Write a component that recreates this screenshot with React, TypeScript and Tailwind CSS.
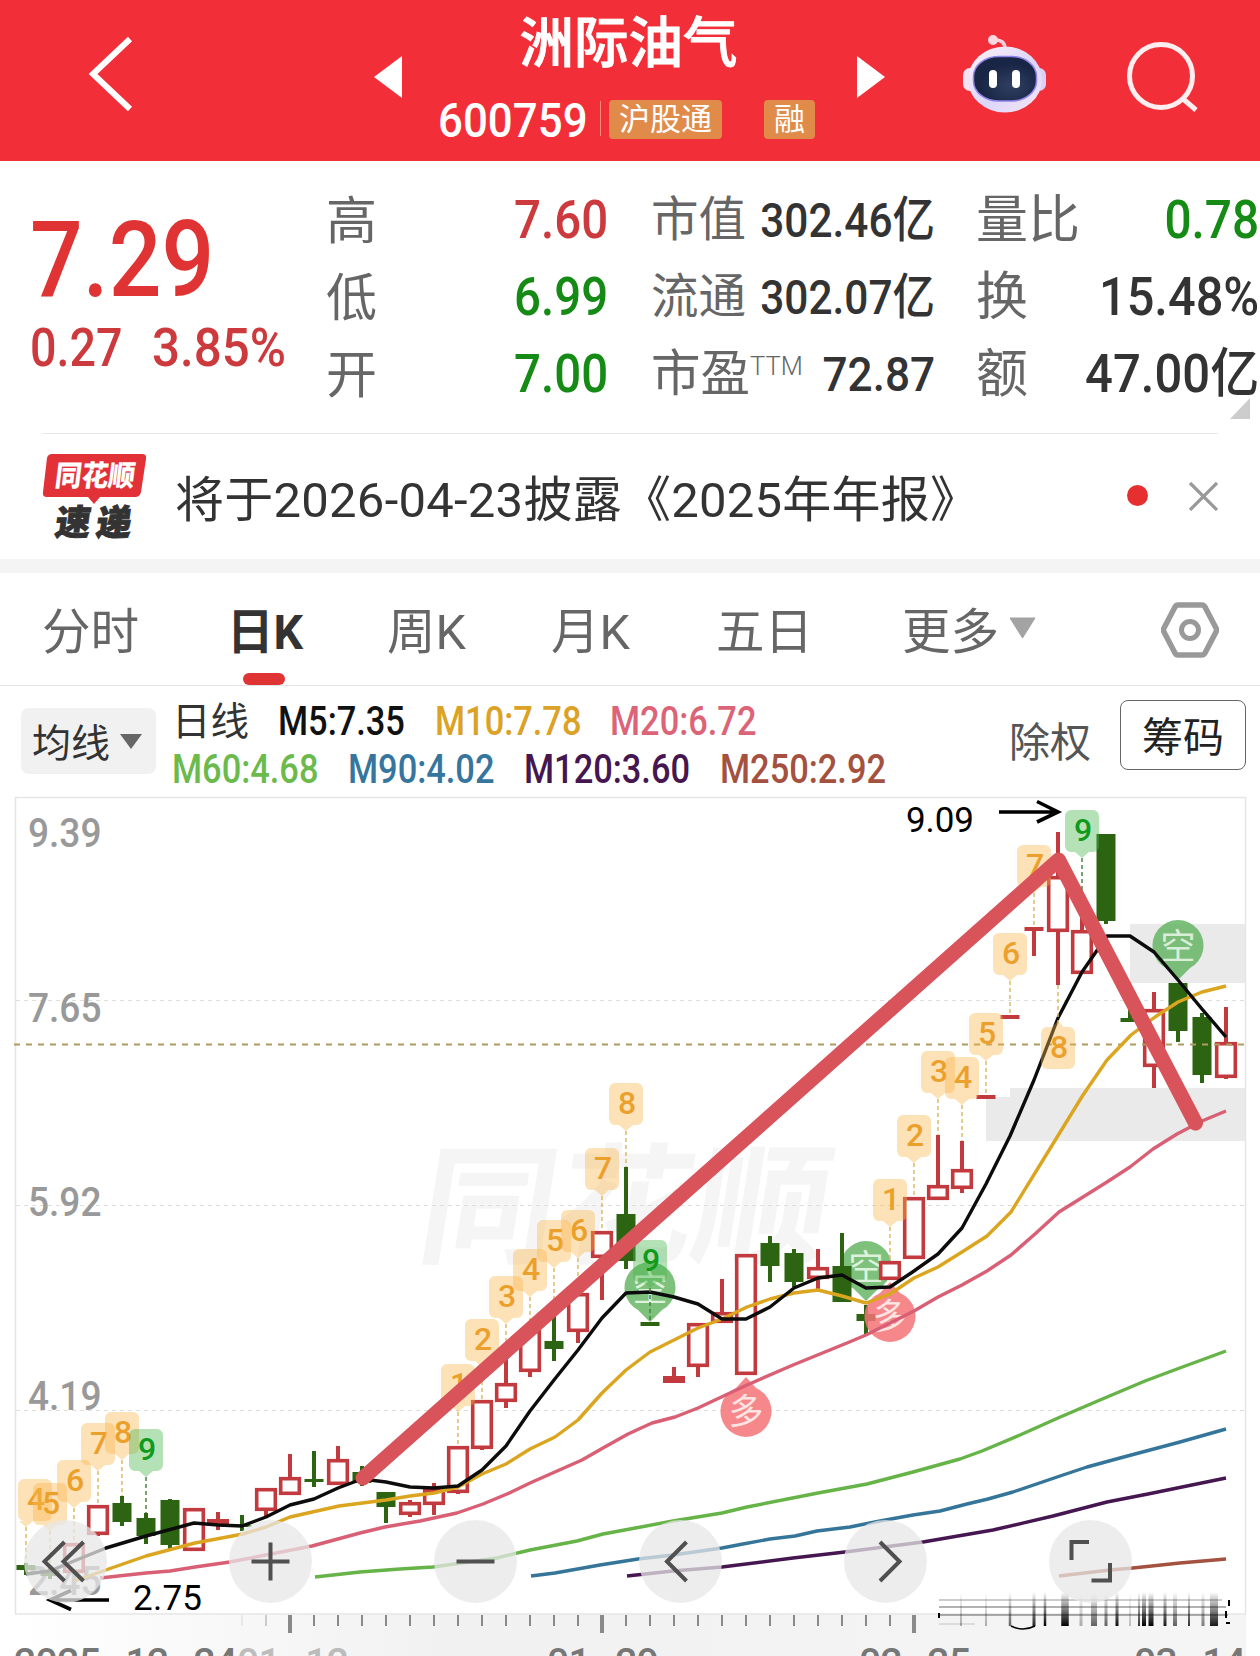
type Tone = 'up' | 'down'

// [x, high, top, bottom, low, tone, filled]
type Candle = [number, number, number, number, number, Tone, boolean?]

const RED = '#c23a3e'
const GREEN = '#2c6412'

const candles: Candle[] = [
  [26, 1563, 1565, 1570, 1575, 'down'],
  [50, 1566, 1570, 1576, 1579, 'down'],
  [74, 1543, 1543, 1573, 1573, 'up'],
  [98, 1505, 1505, 1535, 1536, 'up'],
  [122, 1496, 1503, 1522, 1526, 'down'],
  [146, 1513, 1518, 1536, 1544, 'down'],
  [170, 1499, 1500, 1545, 1549, 'down'],
  [194, 1508, 1508, 1551, 1551, 'up'],
  [218, 1512, 1519, 1526, 1530, 'up', true],
  [242, 1515, 1525, 1527, 1531, 'down'],
  [266, 1488, 1488, 1511, 1516, 'up'],
  [290, 1454, 1477, 1495, 1495, 'up'],
  [314, 1451, 1479, 1482, 1487, 'down'],
  [338, 1446, 1459, 1485, 1485, 'up'],
  [362, 1466, 1472, 1483, 1486, 'down'],
  [386, 1492, 1492, 1507, 1523, 'down'],
  [410, 1500, 1502, 1515, 1517, 'up'],
  [434, 1483, 1489, 1505, 1515, 'up'],
  [458, 1446, 1446, 1493, 1494, 'up'],
  [482, 1400, 1400, 1449, 1450, 'up'],
  [506, 1358, 1383, 1402, 1408, 'up'],
  [530, 1322, 1330, 1372, 1377, 'up'],
  [554, 1305, 1341, 1349, 1361, 'down'],
  [578, 1293, 1293, 1332, 1343, 'up'],
  [602, 1231, 1231, 1258, 1300, 'up'],
  [626, 1167, 1214, 1261, 1269, 'down'],
  [650, 1322, 1322, 1326, 1326, 'down'],
  [674, 1367, 1376, 1383, 1383, 'up', true],
  [698, 1323, 1323, 1367, 1377, 'up'],
  [722, 1279, 1312, 1323, 1323, 'up'],
  [746, 1254, 1254, 1375, 1375, 'up'],
  [770, 1236, 1243, 1266, 1282, 'down'],
  [794, 1249, 1253, 1282, 1287, 'down'],
  [818, 1249, 1267, 1279, 1289, 'up'],
  [842, 1233, 1266, 1302, 1302, 'down'],
  [866, 1305, 1314, 1321, 1335, 'down'],
  [890, 1261, 1261, 1280, 1280, 'up'],
  [914, 1197, 1197, 1259, 1259, 'up'],
  [938, 1135, 1185, 1200, 1200, 'up'],
  [962, 1141, 1169, 1189, 1193, 'up'],
  [986, 1095, 1095, 1099, 1099, 'up', true],
  [1010, 1015, 1015, 1019, 1019, 'up', true],
  [1034, 927, 927, 931, 956, 'up', true],
  [1058, 832, 876, 932, 985, 'up'],
  [1082, 900, 930, 974, 974, 'up'],
  [1106, 834, 834, 921, 924, 'down'],
  [1130, 1005, 1018, 1022, 1022, 'down'],
  [1154, 992, 1009, 1067, 1088, 'up'],
  [1178, 983, 983, 1031, 1042, 'down'],
  [1202, 1013, 1017, 1075, 1083, 'down'],
  [1226, 1007, 1042, 1078, 1079, 'up'],
]

// [pointer x, top of the tag, digit]
const tags: [number, number, number][] = [
  [26, 1479, 4],
  [50, 1483, 5],
  [74, 1460, 6],
  [98, 1423, 7],
  [122, 1412, 8],
  [146, 1429, 9],
  [458, 1364, 1],
  [482, 1319, 2],
  [506, 1276, 3],
  [530, 1249, 4],
  [554, 1220, 5],
  [578, 1210, 6],
  [602, 1148, 7],
  [626, 1083, 8],
  [650, 1240, 9],
  [890, 1179, 1],
  [914, 1115, 2],
  [938, 1051, 3],
  [962, 1057, 4],
  [986, 1013, 5],
  [1010, 933, 6],
  [1034, 845, 7],
  [1058, 1027, 8],
  [1082, 810, 9],
]

const averages = [
  {
    color: '#d85f74',
    points:
      '100,1578 146,1573 170,1571 195,1567 230,1562 312,1546 360,1533 385,1527 420,1521 457,1513 483,1504 507,1494 530,1483 582,1460 603,1448 628,1434 652,1423 675,1417 698,1408 747,1385 793,1365 820,1354 847,1343 866,1335 890,1323 914,1311 938,1297 962,1285 987,1271 1011,1255 1035,1234 1059,1212 1083,1197 1107,1182 1130,1167 1153,1149 1177,1134 1202,1121 1226,1111',
  },
  {
    color: '#dba51f',
    points:
      '74,1581 100,1572 146,1556 195,1543 243,1534 266,1527 290,1517 339,1506 386,1500 410,1496 434,1493 458,1487 482,1474 506,1464 530,1449 555,1437 578,1420 602,1393 626,1370 650,1352 698,1328 722,1319 747,1307 770,1299 794,1293 818,1290 842,1296 866,1303 890,1294 914,1278 938,1267 962,1252 987,1236 1011,1212 1035,1173 1059,1134 1083,1095 1107,1060 1131,1035 1155,1017 1178,1002 1202,992 1226,986',
  },
  {
    color: '#0c0c0c',
    points:
      '26,1574 50,1571 74,1561 106,1548 146,1536 194,1523 218,1525 242,1526 266,1517 290,1505 314,1499 338,1488 362,1479 386,1482 410,1487 434,1488 458,1486 482,1470 506,1446 530,1411 554,1380 578,1350 602,1318 626,1293 650,1292 674,1297 698,1304 722,1319 746,1319 770,1307 794,1288 818,1278 842,1275 866,1288 890,1287 914,1271 938,1254 962,1228 986,1184 1010,1136 1034,1080 1058,1018 1082,972 1098,949 1107,936 1130,936 1154,952 1178,980 1202,1009 1226,1037',
  },
  {
    color: '#66b348',
    points:
      '315,1577 360,1572 400,1569 433,1567 497,1558 530,1550 577,1541 603,1534 630,1529 673,1521 722,1513 747,1507 818,1493 867,1484 913,1472 960,1459 982,1451 1020,1435 1058,1418 1100,1400 1145,1381 1177,1369 1226,1351',
  },
  {
    color: '#35759a',
    points:
      '531,1576 555,1573 600,1565 638,1559 673,1555 722,1548 743,1544 770,1539 795,1536 817,1531 850,1527 880,1521 913,1515 940,1511 967,1504 988,1499 1013,1492 1063,1475 1087,1467 1120,1458 1180,1442 1226,1429',
  },
  {
    color: '#451650',
    points: '627,1576 673,1571 722,1567 793,1558 845,1552 923,1542 993,1530 1053,1516 1107,1502 1148,1494 1226,1478',
  },
  { color: '#a4523f', points: '1059,1576 1110,1570 1133,1568 1180,1563 1226,1559' },
]

const priceLabels: [string, number][] = [
  ['9.39', 847],
  ['7.65', 1022],
  ['5.92', 1216],
  ['4.19', 1410],
  ['2.45', 1595],
]

// [x, width, opacity] of the smeared strip over the time axis
const smears: [number, number, number][] = [
  [961, 2, 0.3], [986, 1.5, 0.4], [1010, 2.5, 0.6], [1034, 3, 0.85], [1045, 2.5, 1], [1065, 7.5, 1],
  [1081, 3, 0.3], [1094, 6, 0.6], [1106, 3, 0.6], [1117, 3, 0.95], [1130, 1.5, 0.3], [1139, 2, 0.8],
  [1144, 4, 1], [1151, 5, 1], [1165, 3, 0.9], [1175, 4, 0.6], [1189, 2, 0.8], [1203, 3, 0.5], [1214, 8, 0.9],
]

function CandleShape({ candle }: { candle: Candle }) {
  const [x, high, top, bottom, low, tone, filled] = candle
  const color = tone === 'up' ? RED : GREEN
  const hollow = tone === 'up' && !filled
  const half = bottom - top < 5 ? 9.5 : tone === 'up' ? 11 : 9.5
  return (
    <g>
      {high < top && <rect x={x - 2} y={high} width={4} height={top - high} fill={color} />}
      {low > bottom && <rect x={x - 2} y={bottom} width={4} height={low - bottom} fill={color} />}
      {hollow ? (
        <rect x={x - 9.3} y={top + 1.7} width={18.6} height={bottom - top - 3.4} fill="#fff" stroke={color} strokeWidth={3.6} />
      ) : (
        <rect x={x - half} y={top} width={half * 2} height={bottom - top} fill={color} />
      )}
    </g>
  )
}

function Tag({ x, y, n }: { x: number; y: number; n: number }) {
  const cx = Math.max(x, 35)
  const green = n === 9
  const below = x === 1058
  const candle = candles.find((c) => c[0] === x)
  const target = candle ? (below ? candle[4] : candle[1]) : y
  return (
    <g>
      <line
        x1={x}
        x2={x}
        y1={below ? y - 3 : y + 48}
        y2={target}
        stroke={green ? '#3f7d33' : '#d9b75c'}
        strokeWidth={1.4}
        strokeDasharray="4 3"
      />
      <path
        d={
          below
            ? `M${cx - 11} ${y}H${cx - 6}L${cx} ${y - 6}L${cx + 6} ${y}H${cx + 11}a6 6 0 0 1 6 6v30a6 6 0 0 1 -6 6H${cx - 11}a6 6 0 0 1 -6 -6v-30a6 6 0 0 1 6 -6Z`
            : `M${cx - 11} ${y}H${cx + 11}a6 6 0 0 1 6 6v30a6 6 0 0 1 -6 6H${x + 7}L${x} ${y + 48}L${x - 7} ${y + 42}H${cx - 11}a6 6 0 0 1 -6 -6v-30a6 6 0 0 1 6 -6Z`
        }
        fill={green ? '#46b54b' : '#f9b64c'}
        fillOpacity={0.4}
      />
      <text x={cx + 1} y={y + 31} textAnchor="middle" fontSize={32} fontWeight={500} fill={green ? '#0f9a1b' : '#eca02c'}>
        {n}
      </text>
    </g>
  )
}

function Signal({ x, y, kind }: { x: number; y: number; kind: '空' | '多' }) {
  const short = kind === '空'
  return (
    <g opacity={short ? 0.8 : 0.85}>
      <path
        d={
          short
            ? `M${x - 12} ${y + 22}L${x} ${y + 34}L${x + 12} ${y + 22}A25.5 25.5 0 1 0 ${x - 12} ${y + 22}Z`
            : `M${x - 10} ${y - 23}L${x} ${y - 34}L${x + 10} ${y - 23}A25.5 25.5 0 1 1 ${x - 10} ${y - 23}Z`
        }
        fill={short ? '#5fb25c' : '#f57478'}
      />
      <text x={x} y={y + 13} textAnchor="middle" fontSize={35} fill={short ? '#d6f0d3' : '#fde0de'}>
        {kind}
      </text>
    </g>
  )
}

function DateLabel({ x, text, opacity = 1 }: { x: number; text: string; opacity?: number }) {
  let at = x
  const xs = text.split('').map((ch) => {
    const cur = at
    at += ch === '-' ? 25 : 21.6
    return ch === '-' ? cur + 5 : cur
  })
  return (
    <text x={xs.join(' ')} y={1676} fontSize={39} fontWeight={500} fill="#777" opacity={opacity}>
      {text}
    </text>
  )
}

function Chart() {
  return (
    <svg className="block" width={1260} height={866} viewBox="0 790 1260 866">
      <defs>
        <linearGradient id="axis" x1="0" x2="1">
          <stop offset="0" stopColor="#fff" />
          <stop offset="0.35" stopColor="#f1f1f1" />
          <stop offset="1" stopColor="#f5f5f5" />
        </linearGradient>
        <linearGradient id="smear" x1="0" y1="0" x2="0" y2="1">
          <stop offset="0" stopColor="#000" stopOpacity="0" />
          <stop offset="1" stopColor="#000" />
        </linearGradient>
      </defs>

      <rect x={15} y={1614} width={1231} height={42} fill="url(#axis)" />

      {/* watermark */}
      <text
        x={0}
        y={0}
        transform="translate(414 1253) skewX(-9)"
        fontSize={130}
        fontWeight={700}
        textLength={410}
        lengthAdjust="spacingAndGlyphs"
        fill="#f5f5f5"
      >
        同花顺
      </text>

      {/* gap zones */}
      <path d="M1130 924H1245V983H1130ZM1010 1088H1245V1141H986V1097H1010Z" fill="#eaeaea" />

      {/* frame and grid */}
      <path d="M15.5 1614V797.5H1245.5V1614Z" fill="none" stroke="#e6e6e6" strokeWidth={1.6} />
      {[1000.5, 1205.5, 1410.5].map((y) => (
        <line key={y} x1={16} x2={1245} y1={y} y2={y} stroke="#dedede" strokeWidth={1.2} strokeDasharray="4 4" />
      ))}

      {priceLabels.map(([label, y]) => (
        <text key={label} x={28} y={y} fontSize={41} fontWeight={500} textLength={73.5} lengthAdjust="spacingAndGlyphs" fill="#999">
          {label}
        </text>
      ))}

      <Signal x={866} y={1267} kind="空" />
      {candles.map((c) => (
        <CandleShape key={c[0]} candle={c} />
      ))}
      <line x1={14} x2={1245} y1={1044.5} y2={1044.5} stroke="#ae9c62" strokeWidth={1.8} strokeDasharray="6 6" />

      <Signal x={650} y={1288} kind="空" />
      <Signal x={1178} y={946} kind="空" />
      <Signal x={746} y={1411} kind="多" />
      <Signal x={890} y={1316} kind="多" />

      {averages.map((line) => (
        <polyline key={line.color} points={line.points} fill="none" stroke={line.color} strokeWidth={3.4} strokeLinejoin="round" />
      ))}

      {tags.map(([x, y, n]) => (
        <Tag key={x} x={x} y={y} n={n} />
      ))}

      {/* extremes */}
      <g fill="none" stroke="#000" strokeWidth={3.6}>
        <path d="M999 812H1058M1037 801.5L1058 812L1037 822" />
        <path d="M109 1600H50M71 1590.5L50 1600L71 1609.5" />
      </g>
      <text x={906} y={832} fontSize={35} textLength={68} fill="#000">9.09</text>
      <text x={133} y={1610} fontSize={35} textLength={69} fill="#000">2.75</text>

      {/* hand-drawn trend */}
      <polyline
        points="363,1478 1058.5,860 1195.5,1123"
        fill="none"
        stroke="#d8535a"
        strokeWidth={15}
        strokeLinecap="round"
        strokeLinejoin="round"
      />

      {/* time axis */}
      {Array.from({ length: 41 }, (_, i) => 242 + i * 24).map((x) => {
        const major = (x - 290) % 312 === 0
        if (x > 914 && !major) return null
        return (
          <rect
            key={x}
            x={major ? x - 2 : x - 1}
            y={1615}
            width={major ? 4 : 2}
            height={major ? 18 : 11}
            fill="#8a8a8a"
            opacity={x === 242 ? 0.15 : x === 266 ? 0.4 : 1}
          />
        )
      })}
      <DateLabel x={14} text="2025-12-24" />
      <DateLabel x={237} text="01-12" opacity={0.45} />
      <DateLabel x={547} text="01-29" />
      <DateLabel x={859} text="02-25" />
      <DateLabel x={1134} text="03-14" />

      {smears.map(([x, w, o]) => (
        <rect key={x} x={x - w / 2} y={1592} width={w} height={34} fill="url(#smear)" opacity={o} />
      ))}
      <g stroke="#000">
        <path d="M939 1600H1222" strokeOpacity={0.2} strokeWidth={1.8} />
        <path d="M939 1607H1226" strokeOpacity={0.3} strokeWidth={1.8} />
        <path d="M938 1615H1228" strokeOpacity={0.3} strokeWidth={1.8} />
        <path d="M939 1624H975" strokeOpacity={0.2} />
        <path d="M1011 1626Q1023 1632 1035 1626" fill="none" strokeWidth={1.6} />
        <path d="M1229 1600V1606M1226 1611V1618M1226 1623H1230M939 1613V1618" strokeWidth={2} />
      </g>
    </svg>
  )
}

const toolIcons = [
  'M40.500 22L20.500 41.500L40.500 61M59.500 22L39.500 41.500L59.500 61',
  'M22.5 41.5H60.5M41.5 22.5V60.5',
  'M22.5 41.5H60.5',
  'M47.5 22L28 41.5L47.5 61',
  'M36 22L55.5 41.5L36 61',
  'M22.5 40V22H40M42.5 60.5H61V43',
]

function Toolbar() {
  return (
    <div className="absolute top-[730px] left-[24px] flex gap-[122px]">
      {toolIcons.map((d) => (
        <button key={d} className="size-[83px] rounded-full bg-[#e7e7e7]/75">
          <svg width={83} height={83} viewBox="0 0 83 83" fill="none" stroke="#505050" strokeWidth={4}>
            <path d={d} />
          </svg>
        </button>
      ))}
    </div>
  )
}

function Robot() {
  return (
    <svg className="ml-[77px] block" width={86} height={80} viewBox="0 0 86 80">
      <defs>
        <linearGradient id="shell" x1="0" y1="0" x2="1" y2="1">
          <stop offset="0" stopColor="#fff2f6" />
          <stop offset="0.55" stopColor="#dcd6fb" />
          <stop offset="1" stopColor="#f6e6f4" />
        </linearGradient>
        <radialGradient id="visor" cx="0.6" cy="0.65">
          <stop offset="0" stopColor="#303f61" />
          <stop offset="1" stopColor="#182545" />
        </radialGradient>
      </defs>
      <path d="M31 6Q43 5 43 15" fill="none" stroke="#f8cfdc" strokeWidth={3.5} />
      <circle cx={31} cy={6} r={5} fill="#fbd7e2" />
      <rect x={1} y={34} width={14} height={23} rx={7} fill="#f6e3f2" />
      <rect x={70} y={34} width={14} height={23} rx={7} fill="#ddd0f6" />
      <ellipse cx={43} cy={45.5} rx={37} ry={33} fill="url(#shell)" />
      <rect x={11.5} y={22.500} width={63} height={44.500} rx={25} ry={20} fill="url(#visor)" stroke="#8d83e8" strokeWidth={1.5} />
      <rect x={27} y={36} width={8} height={18} rx={4} fill="#fff" />
      <rect x={50} y={36} width={8} height={18} rx={4} fill="#fff" />
    </svg>
  )
}

function Header() {
  return (
    <header className="flex h-[161px] bg-[#f22f38] text-white">
      <svg className="mt-[34px] ml-[86px] block" width={50} height={80} fill="none" stroke="#fff" strokeWidth={6}>
        <path d="M44 5L7 40L44 75" />
      </svg>
      <svg className="mt-[56px] ml-[238px] block" width={28} height={42}>
        <path d="M28 0V42L0 21Z" fill="#fff" />
      </svg>
      <div className="w-[455px]">
        <h1 className="mt-[13px] h-[60px] pr-[2px] text-center text-[54.5px] leading-[60px] font-medium [-webkit-text-stroke:0.9px_#fff]">
          洲际油气
        </h1>
        <div className="mt-[27px] flex h-[39px] pl-[36px]">
          <span className="w-[162px] origin-left scale-x-[0.895] text-[49px] leading-[41px] font-medium">600759</span>
          <span className="mt-px h-[35px] w-px bg-[#ff8a7c]" />
          <span className="ml-[8px] w-[113px] rounded-[4px] bg-[#e08b4a] text-center text-[31px] leading-[39px]">沪股通</span>
          <span className="ml-[42px] w-[51px] rounded-[4px] bg-[#e08b4a] text-center text-[31px] leading-[39px]">融</span>
        </div>
      </div>
      <svg className="mt-[56px] block" width={28} height={42}>
        <path d="M0 0V42L28 21Z" fill="#fff" />
      </svg>
      <div className="mt-[34px]">
        <Robot />
      </div>
      <svg className="mt-[40px] ml-[77px] block" width={76} height={76} fill="none" stroke="#ffeef0" strokeWidth={5}>
        <circle cx={36} cy={36} r={31.5} />
        <path d="M57 58L71 70" />
      </svg>
    </header>
  )
}

function Quote() {
  return (
    <section className="flex h-[272px] pt-[21px] text-[#333]">
      <div className="w-[328px] pl-[30px] font-medium whitespace-nowrap text-[#e03434]">
        <div className="mt-[28px] h-[100px] origin-left scale-x-[0.885] text-[105px] leading-[102px]">7.29</div>
        <div className="mt-[8px] flex h-[60px] text-[53px] leading-[60px] text-[#cc3a3d]">
          <span className="w-[122px] origin-left scale-x-[0.88]">0.27</span>
          <span className="origin-left scale-x-[0.93]">3.85%</span>
        </div>
      </div>

      <div className="w-[280px] text-[53px] leading-[77px] font-medium">
        <div className="flex h-[77px] justify-between">
          <span className="ml-[-2px] text-[51px] leading-[79px] font-normal text-[#666]">高</span>
          <span className="origin-right scale-x-[0.895] text-[#cc3a3d]">7.60</span>
        </div>
        <div className="flex h-[77px] justify-between">
          <span className="ml-[-2px] text-[51px] leading-[79px] font-normal text-[#666]">低</span>
          <span className="origin-right scale-x-[0.895] text-[#158a15]">6.99</span>
        </div>
        <div className="flex h-[77px] justify-between">
          <span className="ml-[-2px] text-[51px] leading-[79px] font-normal text-[#666]">开</span>
          <span className="origin-right scale-x-[0.895] text-[#158a15]">7.00</span>
        </div>
      </div>

      <div className="ml-[43px] w-[284px] text-[49px] leading-[77px] font-medium whitespace-nowrap">
        <div className="flex h-[77px] justify-between">
          <span className="w-[100px] text-[47.5px] font-normal text-[#666]">市值</span>
          <span className="flex w-[184px] justify-end">
            <span className="origin-right scale-x-[0.865]">302.46亿</span>
          </span>
        </div>
        <div className="flex h-[77px] justify-between">
          <span className="w-[100px] text-[47.5px] font-normal text-[#666]">流通</span>
          <span className="flex w-[184px] justify-end">
            <span className="origin-right scale-x-[0.865]">302.07亿</span>
          </span>
        </div>
        <div className="flex h-[77px] justify-between">
          <span className="flex text-[49.5px] font-normal text-[#666]">
            市盈<span className="text-[25.5px] leading-[61px] font-light">TTM</span>
          </span>
          <span className="origin-right scale-x-[0.9]">72.87</span>
        </div>
      </div>

      <div className="ml-[41px] flex w-[283px] flex-col text-[53px] leading-[77px] font-medium whitespace-nowrap">
        <div className="flex h-[77px] justify-between">
          <span className="text-[52px] font-normal text-[#666]">量比</span>
          <span className="origin-right scale-x-[0.9] text-[#158a15]">0.78</span>
        </div>
        <div className="flex h-[77px] justify-between">
          <span className="text-[52px] font-normal text-[#666]">换</span>
          <span className="origin-right scale-x-[0.92]">15.48%</span>
        </div>
        <div className="flex h-[77px] justify-between">
          <span className="text-[52px] font-normal text-[#666]">额</span>
          <span className="origin-right scale-x-[0.925]">47.00亿</span>
        </div>
        <svg className="mt-[-15px] mr-[9px] block self-end" width={20} height={21}>
          <path d="M20 0V21H0Z" fill="#ccc" />
        </svg>
      </div>
    </section>
  )
}

function News() {
  return (
    <section className="mx-[42px] flex h-[126px] border-t border-[#e8e8e8] text-[#333]">
      <svg className="mt-[19px] block" width={106} height={88} viewBox="0 0 106 88">
        <path d="M10 1H100q5 0 4 5L99 39q-1 5 -6 5H58L52 51L46 44H5q-5 0 -4 -5L5 5q1 -4 5 -4Z" fill="#e23238" />
        <g fontWeight={900}>
          <text transform="translate(12 33) skewX(-7)" fontSize={29} textLength={80} lengthAdjust="spacingAndGlyphs" fill="#fff">
            同花顺
          </text>
          <text transform="translate(12 82) skewX(-8)" fontSize={35} stroke="#333" strokeWidth={1} textLength={76} lengthAdjust="spacing" fill="#333">
            速递
          </text>
        </g>
      </svg>
      <p className="ml-[27px] w-[945px] text-[49px] leading-[133px] tracking-[0.25px] whitespace-nowrap">
        将于2026-04-23披露《2025年年报》
      </p>
      <span className="mt-[51px] ml-[7px] size-[21px] shrink-0 rounded-full bg-[#e6302f]" />
      <svg className="mt-[47px] ml-auto block shrink-0" width={30} height={30} stroke="#999" strokeWidth={3.2}>
        <path d="M2 2L29 29M29 2L2 29" />
      </svg>
    </section>
  )
}

function Tabs() {
  return (
    <nav className="flex h-[113px] border-b border-[#e4e4e4] text-[48.5px] leading-[120px] font-normal whitespace-nowrap text-[#666]">
      <span className="ml-[42px] w-[185px]">分时</span>
      <span className="relative w-[160px] font-bold text-[#333]">
        <span className="inline-block origin-left scale-x-[0.96]">日K</span>
        <i className="absolute bottom-0 left-[16px] h-[12px] w-[42px] rounded-full bg-[#e03434]" />
      </span>
      <span className="w-[164px]">周K</span>
      <span className="w-[165px]">月K</span>
      <span className="w-[186px]">五日</span>
      <span>更多</span>
      <svg className="mt-[44px] ml-[10px] block" width={27} height={22}>
        <path d="M1 1H26L13.500 21Z" fill="#a3a3a3" stroke="#a3a3a3" strokeLinejoin="round" />
      </svg>
      <svg className="mt-[28px] ml-[125px] block" width={58} height={58} fill="none" stroke="#999">
        <path d="M17 4H41Q43 4 44 6L55 27Q56 29 55 31L44 52Q43 54 41 54H17Q15 54 14 52L3 31Q2 29 3 27L14 6Q15 4 17 4Z" strokeWidth={5.500} />
        <circle cx={29} cy={29} r={8.500} strokeWidth={5} />
      </svg>
    </nav>
  )
}

function Legend() {
  return (
    <section className="flex h-[104px] whitespace-nowrap">
      <button className="mt-[22px] ml-[21px] flex h-[66px] w-[135px] items-center rounded-[8px] bg-[#f1f1f1] pl-[11px] text-[39px] leading-[66px] text-[#333]">
        <span className="mt-[5px]">均线</span>
        <svg className="ml-[10px] block" width={22} height={15}>
          <path d="M0 0H22L11 15Z" fill="#666" />
        </svg>
      </button>
      <div className="ml-[16px] w-[837px] pt-[12px] text-[40px] leading-[48px] font-medium">
        <div className="flex h-[48px]">
          <span className="w-[106px] text-[38.5px] font-normal text-[#333]">日线</span>
          <span className="w-[157px] origin-left scale-x-[0.86] text-[#111]">M5:7.35</span>
          <span className="w-[175px] origin-left scale-x-[0.86] text-[#dba226]">M10:7.78</span>
          <span className="origin-left scale-x-[0.86] text-[#dc6478]">M20:6.72</span>
        </div>
        <div className="flex h-[48px]">
          <span className="w-[176px] origin-left scale-x-[0.86] text-[#6cba4c]">M60:4.68</span>
          <span className="w-[176px] origin-left scale-x-[0.86] text-[#35759e]">M90:4.02</span>
          <span className="w-[196px] origin-left scale-x-[0.86] text-[#451650]">M120:3.60</span>
          <span className="origin-left scale-x-[0.86] text-[#a4523f]">M250:2.92</span>
        </div>
      </div>
      <span className="mt-[22px] w-[111px] text-[41px] leading-[71px] font-normal text-[#555]">除权</span>
      <button className="mt-[14px] h-[70px] w-[126px] rounded-[8px] border border-[#666] text-center text-[41px] leading-[74px] font-normal text-[#222]">
        筹码
      </button>
    </section>
  )
}

export default function App() {
  return (
    <div className="h-[1656px] w-[1260px] overflow-hidden bg-white font-[Roboto,'Noto_Sans_CJK_SC',sans-serif]">
      <Header />
      <Quote />
      <News />
      <div className="h-[14px] bg-[#f4f4f4]" />
      <Tabs />
      {/* the legend sits flush with the chart frame */}
      <div className="relative h-[970px]">
        <Legend />
        <div className="relative">
          <Chart />
          <Toolbar />
        </div>
      </div>
    </div>
  )
}
